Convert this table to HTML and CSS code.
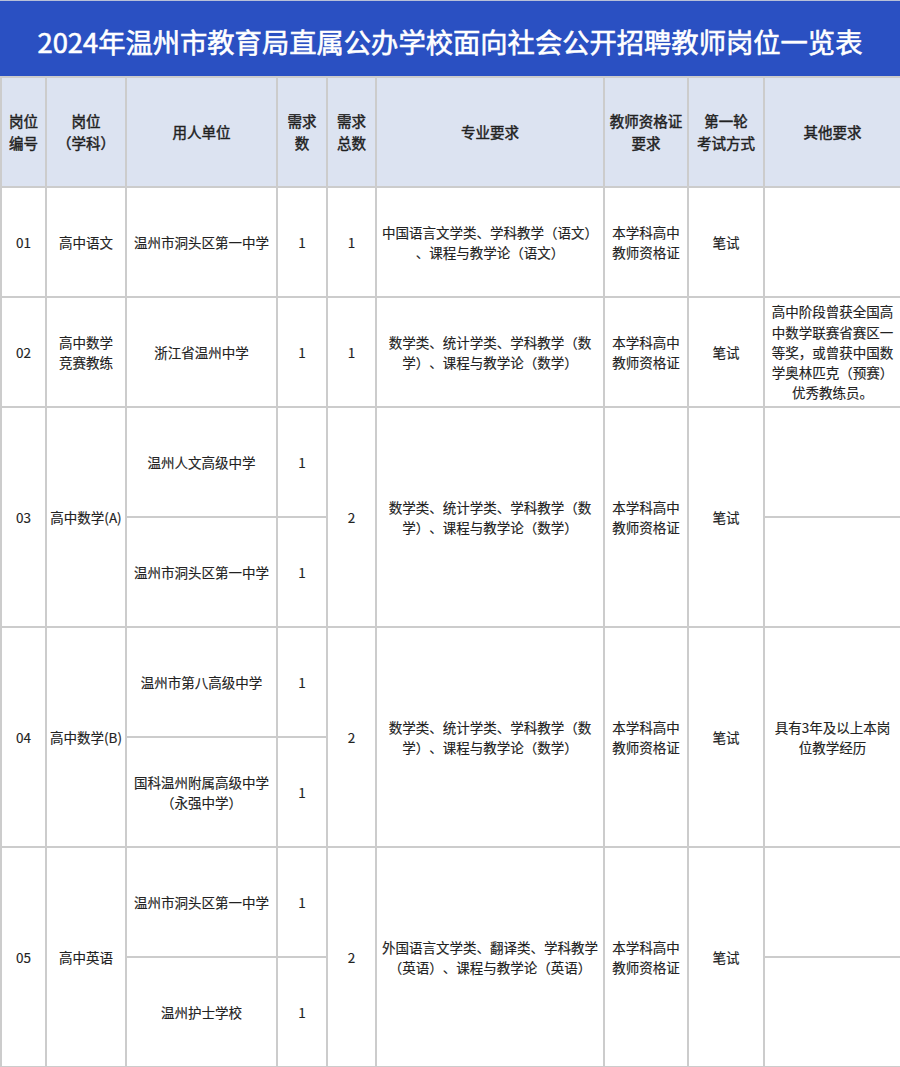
FILE: index.html
```html
<!DOCTYPE html>
<html lang="zh-CN">
<head>
<meta charset="utf-8">
<title>2024年温州市教育局直属公办学校面向社会公开招聘教师岗位一览表</title>
<link rel="stylesheet" href="styles.css">
</head>
<body>
<div class="sheet">
  <div class="title">2024年温州市教育局直属公办学校面向社会公开招聘教师岗位一览表</div>
  <table class="grid">
    <colgroup>
      <col class="c-no"><col class="c-subj"><col class="c-unit"><col class="c-num"><col class="c-total"><col class="c-major"><col class="c-cert"><col class="c-exam"><col class="c-other">
    </colgroup>
    <thead>
      <tr class="head">
        <th>岗位<br>编号</th>
        <th>岗位<br>（学科）</th>
        <th>用人单位</th>
        <th>需求<br>数</th>
        <th>需求<br>总数</th>
        <th>专业要求</th>
        <th>教师资格证<br>要求</th>
        <th>第一轮<br>考试方式</th>
        <th>其他要求</th>
      </tr>
    </thead>
    <tbody>
      <tr>
        <td>01</td>
        <td>高中语文</td>
        <td>温州市洞头区第一中学</td>
        <td>1</td>
        <td>1</td>
        <td>中国语言文学类、学科教学（语文）<br>、课程与教学论（语文）</td>
        <td>本学科高中<br>教师资格证</td>
        <td>笔试</td>
        <td></td>
      </tr>
      <tr>
        <td>02</td>
        <td>高中数学<br>竞赛教练</td>
        <td>浙江省温州中学</td>
        <td>1</td>
        <td>1</td>
        <td>数学类、统计学类、学科教学（数<br>学）、课程与教学论（数学）</td>
        <td>本学科高中<br>教师资格证</td>
        <td>笔试</td>
        <td class="other">高中阶段曾获全国高<br>中数学联赛省赛区一<br>等奖，或曾获中国数<br>学奥林匹克（预赛）<br>优秀教练员。</td>
      </tr>
      <tr>
        <td rowspan="2">03</td>
        <td rowspan="2">高中数学(A)</td>
        <td>温州人文高级中学</td>
        <td>1</td>
        <td rowspan="2">2</td>
        <td rowspan="2">数学类、统计学类、学科教学（数<br>学）、课程与教学论（数学）</td>
        <td rowspan="2">本学科高中<br>教师资格证</td>
        <td rowspan="2">笔试</td>
        <td></td>
      </tr>
      <tr>
        <td>温州市洞头区第一中学</td>
        <td>1</td>
        <td></td>
      </tr>
      <tr>
        <td rowspan="2">04</td>
        <td rowspan="2">高中数学(B)</td>
        <td>温州市第八高级中学</td>
        <td>1</td>
        <td rowspan="2">2</td>
        <td rowspan="2">数学类、统计学类、学科教学（数<br>学）、课程与教学论（数学）</td>
        <td rowspan="2">本学科高中<br>教师资格证</td>
        <td rowspan="2">笔试</td>
        <td rowspan="2" class="other">具有3年及以上本岗<br>位教学经历</td>
      </tr>
      <tr>
        <td>国科温州附属高级中学<br>（永强中学）</td>
        <td>1</td>
      </tr>
      <tr>
        <td rowspan="2">05</td>
        <td rowspan="2">高中英语</td>
        <td>温州市洞头区第一中学</td>
        <td>1</td>
        <td rowspan="2">2</td>
        <td rowspan="2">外国语言文学类、翻译类、学科教学<br>（英语）、课程与教学论（英语）</td>
        <td rowspan="2">本学科高中<br>教师资格证</td>
        <td rowspan="2">笔试</td>
        <td></td>
      </tr>
      <tr>
        <td>温州护士学校</td>
        <td>1</td>
        <td></td>
      </tr>
    </tbody>
  </table>
</div>
</body>
</html>
```

FILE: styles.css
```css
html, body {
  margin: 0;
  padding: 0;
  background: #ffffff;
}

* {
  text-spacing-trim: space-all;
}

body {
  font-family: "Noto Sans CJK SC", "Noto Sans", sans-serif;
  color: #222222;
}

.sheet {
  width: 900px;
}

.title {
  box-sizing: border-box;
  height: 76px;
  border-top: 1px solid #b7c0d8;
  background: #2a50c2;
  color: #ffffff;
  font-size: 27.3px;
  font-weight: 400;
  -webkit-text-stroke: 0.6px #ffffff;
  display: flex;
  align-items: center;
  justify-content: center;
  padding-top: 4px;
}

.grid {
  width: 900px;
  table-layout: fixed;
  border-collapse: collapse;
  border: 2px solid #cccccc;
  border-top: none;
}

.c-no { width: 45px; }
.c-subj { width: 80px; }
.c-unit { width: 151px; }
.c-num { width: 50px; }
.c-total { width: 49px; }
.c-major { width: 228px; }
.c-cert { width: 84px; }
.c-exam { width: 76px; }
.c-other { width: 137px; }

.grid tr {
  height: 110px;
}

.grid th,
.grid td {
  border: 2px solid #cccccc;
  padding: 0 2px;
  text-align: center;
  vertical-align: middle;
  font-size: 13.5px;
  line-height: 20px;
  white-space: nowrap;
  -webkit-text-stroke: 0.15px #222222;
}

.grid th {
  background: #dce3f1;
  font-size: 14.5px;
  font-weight: 400;
  -webkit-text-stroke: 0.45px #222222;
  line-height: 22px;
  color: #222222;
}

.grid td.other {
  line-height: 20.3px;
}
```
